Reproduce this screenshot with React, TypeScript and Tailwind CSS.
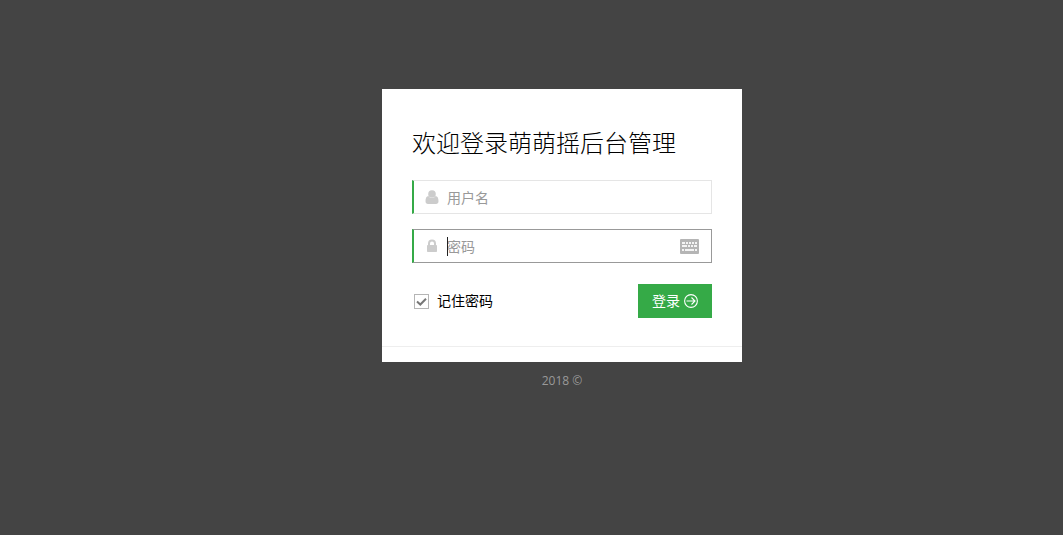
import { useState } from "react";

const inputClass =
  "block h-[34px] w-full border border-l-2 border-l-[#35aa47] bg-white pl-[33px] text-sm text-[#333] placeholder-[#999] outline-none";

function UserIcon() {
  return (
    <svg viewBox="0 0 14 14" className="h-3.5 w-3.5" fill="#ccc" aria-hidden="true">
      <circle cx="7" cy="4" r="3.8" />
      <path d="M3.5 6C1.300 6.300.5 8.200.5 11.200.5 13 1.500 14 3 14h8c1.500 0 2.500-1 2.500-2.800 0-3-.8-4.900-3-5.200C9.600 7.400 8.400 8 7 8S4.400 7.400 3.500 6Z" />
    </svg>
  );
}

function LockIcon() {
  return (
    <svg viewBox="0 0 14 14" className="h-3.5 w-3.5" aria-hidden="true">
      <path d="M4 7V4.500a3 3 0 0 1 6 0V7" fill="none" stroke="#ccc" strokeWidth="2" />
      <rect x="2" y="6" width="10" height="7" rx=".8" fill="#ccc" />
    </svg>
  );
}

function KeyboardIcon() {
  return (
    <svg viewBox="0 0 19 15" className="h-[15px] w-[19px]" aria-hidden="true">
      <rect width="19" height="15" rx="1" fill="#b5b5b5" />
      <path
        fill="#f4f4f4"
        d="M2 3h3v2H2zM6 3h2v2H6zM9 3h2v2H9zM12 3h2v2h-2zM15 3h2v2h-2zM2 6h5v2H2zM8 6h2v2H8zM11 6h2v2h-2zM14 6h3v2h-3zM2 10h2v2H2zM5 10h9v2H5zM15 10h2v2h-2z"
      />
    </svg>
  );
}

function ArrowIcon() {
  return (
    <svg
      viewBox="0 0 14 14"
      className="h-3.5 w-3.5"
      fill="none"
      stroke="#fff"
      strokeWidth="1.100"
      aria-hidden="true"
    >
      <circle cx="7" cy="7" r="6.400" />
      <path d="M2.500 7h8.500M7.500 3.500L11 7l-3.500 3.500" />
    </svg>
  );
}

export default function App() {
  const [username, setUsername] = useState("");
  const [password, setPassword] = useState("");
  const [remember, setRemember] = useState(true);

  return (
    <div className="min-h-screen bg-[#444] pt-[89px] pl-[61px] font-['Open_Sans','Noto_Sans_CJK_SC',sans-serif]">
      <main className="mx-auto w-full max-w-[360px] bg-white px-[30px] pt-9 pb-[15px]">
        <form onSubmit={(e) => e.preventDefault()}>
          <h1 className="mb-[19px] text-2xl leading-9 font-light text-black">
            欢迎登录萌萌摇后台管理
          </h1>

          {/* Username */}
          <div className="relative mb-[15px]">
            <label htmlFor="username" className="absolute top-2.5 left-[13px]">
              <UserIcon />
            </label>
            <input
              id="username"
              type="text"
              aria-label="用户名"
              placeholder="用户名"
              value={username}
              onChange={(e) => setUsername(e.target.value)}
              className={`${inputClass} border-y-[#e5e5e5] border-r-[#e5e5e5]`}
            />
          </div>

          {/* Password */}
          <div className="relative mb-[21px]">
            <label htmlFor="password" className="absolute top-2.5 left-[13px]">
              <LockIcon />
            </label>
            <input
              id="password"
              type="password"
              aria-label="密码"
              placeholder="密码"
              value={password}
              onChange={(e) => setPassword(e.target.value)}
              className={`${inputClass} border-y-[#999] border-r-[#999] pr-10 ${
                password === "" ? "caret-transparent" : "caret-black"
              }`}
            />
            {password === "" && (
              <span className="pointer-events-none absolute top-2 left-[35px] h-[19px] w-px bg-[#222]" />
            )}
            <button type="button" aria-label="键盘" className="absolute top-2.5 right-[13px]">
              <KeyboardIcon />
            </button>
          </div>

          {/* Actions */}
          <div className="flex items-center justify-between">
            <label className="flex items-center gap-2 pl-0.5 text-sm text-black">
              <span className="relative block h-[15px] w-[15px]">
                <input
                  type="checkbox"
                  checked={remember}
                  onChange={(e) => setRemember(e.target.checked)}
                  className="block h-[15px] w-[15px] appearance-none border border-[#b5b5b5] bg-white"
                />
                {remember && (
                  <svg
                    viewBox="0 0 15 15"
                    className="pointer-events-none absolute inset-0"
                    fill="none"
                    stroke="#777"
                    strokeWidth="2"
                    aria-hidden="true"
                  >
                    <path d="M3 7.500l3.300 3L12 4.800" />
                  </svg>
                )}
              </span>
              记住密码
            </label>
            <button
              type="submit"
              className="flex h-[34px] items-center gap-1 bg-[#35aa47] px-3.5 text-sm text-white"
            >
              登录
              <ArrowIcon />
            </button>
          </div>
        </form>
        <hr className="-mx-[30px] mt-7 border-[#eee]" />
      </main>
      <footer className="pt-2.5 text-center text-xs leading-[18px] text-[#999]">2018 ©</footer>
    </div>
  );
}
